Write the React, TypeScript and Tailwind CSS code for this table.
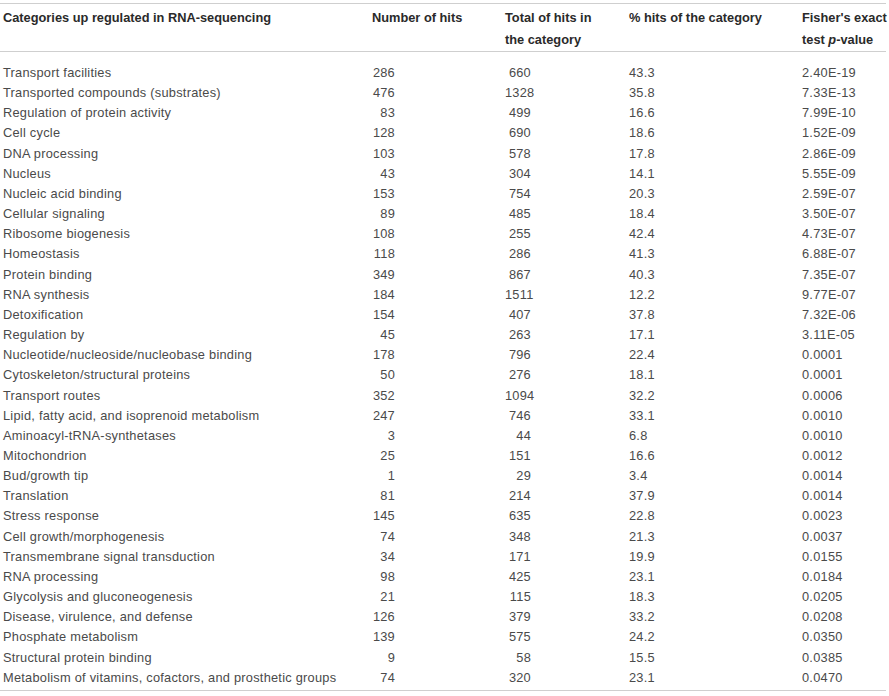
const rows: [string, string, string, string, string][] = [
  ["Transport facilities", "286", "660", "43.3", "2.40E-19"],
  ["Transported compounds (substrates)", "476", "1328", "35.8", "7.33E-13"],
  ["Regulation of protein activity", "83", "499", "16.6", "7.99E-10"],
  ["Cell cycle", "128", "690", "18.6", "1.52E-09"],
  ["DNA processing", "103", "578", "17.8", "2.86E-09"],
  ["Nucleus", "43", "304", "14.1", "5.55E-09"],
  ["Nucleic acid binding", "153", "754", "20.3", "2.59E-07"],
  ["Cellular signaling", "89", "485", "18.4", "3.50E-07"],
  ["Ribosome biogenesis", "108", "255", "42.4", "4.73E-07"],
  ["Homeostasis", "118", "286", "41.3", "6.88E-07"],
  ["Protein binding", "349", "867", "40.3", "7.35E-07"],
  ["RNA synthesis", "184", "1511", "12.2", "9.77E-07"],
  ["Detoxification", "154", "407", "37.8", "7.32E-06"],
  ["Regulation by", "45", "263", "17.1", "3.11E-05"],
  ["Nucleotide/nucleoside/nucleobase binding", "178", "796", "22.4", "0.0001"],
  ["Cytoskeleton/structural proteins", "50", "276", "18.1", "0.0001"],
  ["Transport routes", "352", "1094", "32.2", "0.0006"],
  ["Lipid, fatty acid, and isoprenoid metabolism", "247", "746", "33.1", "0.0010"],
  ["Aminoacyl-tRNA-synthetases", "3", "44", "6.8", "0.0010"],
  ["Mitochondrion", "25", "151", "16.6", "0.0012"],
  ["Bud/growth tip", "1", "29", "3.4", "0.0014"],
  ["Translation", "81", "214", "37.9", "0.0014"],
  ["Stress response", "145", "635", "22.8", "0.0023"],
  ["Cell growth/morphogenesis", "74", "348", "21.3", "0.0037"],
  ["Transmembrane signal transduction", "34", "171", "19.9", "0.0155"],
  ["RNA processing", "98", "425", "23.1", "0.0184"],
  ["Glycolysis and gluconeogenesis", "21", "115", "18.3", "0.0205"],
  ["Disease, virulence, and defense", "126", "379", "33.2", "0.0208"],
  ["Phosphate metabolism", "139", "575", "24.2", "0.0350"],
  ["Structural protein binding", "9", "58", "15.5", "0.0385"],
  ["Metabolism of vitamins, cofactors, and prosthetic groups", "74", "320", "23.1", "0.0470"],
];

const cols = "grid grid-cols-[369px_133px_124px_173px_1fr]";

export default function App() {
  return (
    <div className="w-[889px] h-[696px] bg-white font-['Liberation_Sans',Arial,sans-serif] text-[12.8px]">
      <div className="w-[886px] pt-[3px]">
        <div className="border-t border-b border-[#cfcfcf]">
          <div className={`${cols} px-[3px] pt-[3px] leading-[22px] font-bold text-[#2a2a2a] whitespace-nowrap`}>
            <div>Categories up regulated in RNA-sequencing</div>
            <div>Number of hits</div>
            <div>
              Total of hits in
              <br />
              the category
            </div>
            <div>% hits of the category</div>
            <div>
              Fisher's exact
              <br />
              test <i>p</i>-value
            </div>
          </div>
        </div>
        <div className="border-b border-[#cfcfcf] pt-[11px] pb-[2px] text-[#4a4a4a] tracking-[0.25px]">
          {rows.map((r) => (
            <div key={r[0]} className={`${cols} px-[3px] h-[20.17px] leading-[20px] whitespace-nowrap`}>
              <div>{r[0]}</div>
              <div className="w-[23px] text-right">{r[1]}</div>
              <div className="w-[26px] text-right">{r[2]}</div>
              <div>{r[3]}</div>
              <div>{r[4]}</div>
            </div>
          ))}
        </div>
      </div>
    </div>
  );
}
